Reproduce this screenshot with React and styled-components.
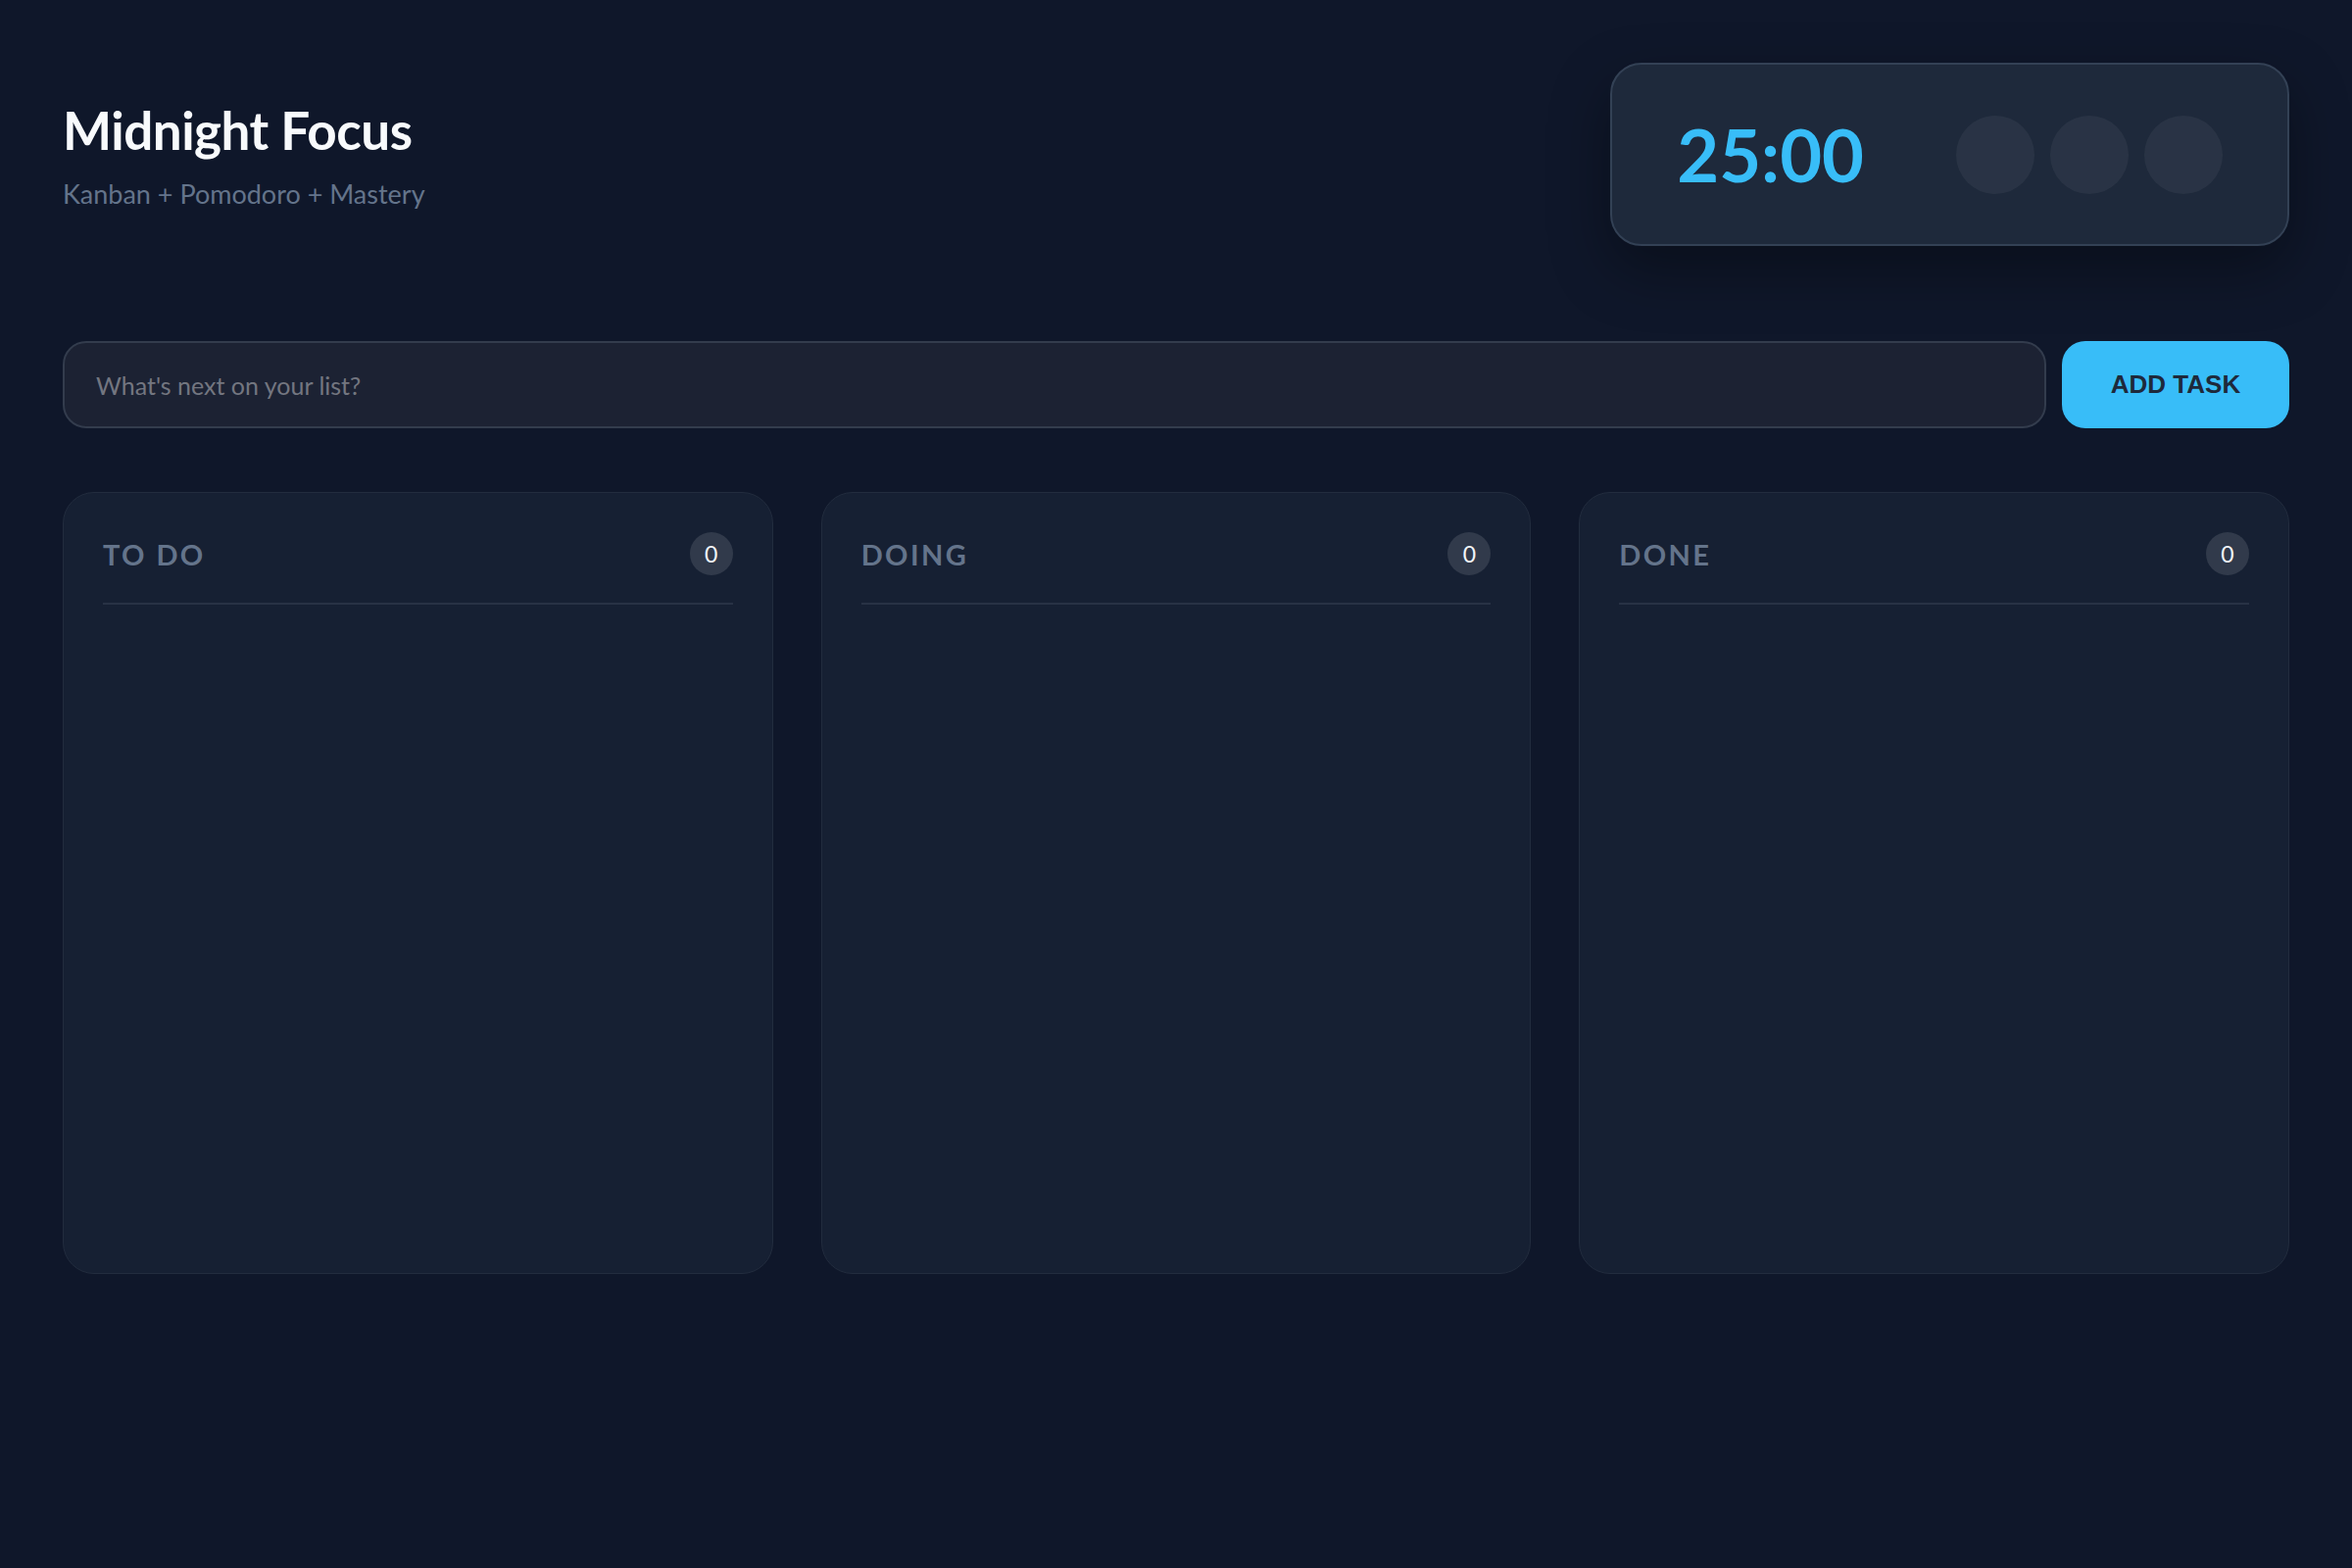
import styled, { createGlobalStyle } from "styled-components";

const GlobalStyle = createGlobalStyle`
  * {
    box-sizing: border-box;
  }
  html, body {
    margin: 0;
    background: #0f172a;
    min-height: 100%;
  }
  body {
    font-family: Lato, "Noto Sans", sans-serif;
    color: #f8fafc;
  }
`;

const Page = styled.div`
  min-height: 1600px;
  padding: 64px;
  background: #0f172a;
`;

const Header = styled.header`
  display: flex;
  justify-content: space-between;
  align-items: center;
  margin-bottom: 97px;
`;

const Brand = styled.div`
  display: flex;
  flex-direction: column;
  gap: 18px;
`;

const Title = styled.h1`
  margin: 0;
  font-size: 53px;
  line-height: 1.2;
  font-weight: 700;
  color: #f8fafc;
  letter-spacing: -0.5px;
`;

const Subtitle = styled.p`
  margin: 0;
  font-size: 27px;
  line-height: 1.2;
  color: #64748b;
`;

const TimerCard = styled.div`
  display: flex;
  align-items: center;
  gap: 94px;
  height: 187px;
  padding: 0 66px;
  background: #1e293b;
  border: 2px solid #334155;
  border-radius: 32px;
  box-shadow: 0 24px 60px rgba(0, 0, 0, 0.35);
`;

const Clock = styled.div`
  font-size: 74px;
  font-weight: 700;
  color: #38bdf8;
  line-height: 1;
  font-variant-numeric: tabular-nums;
`;

const Controls = styled.div`
  display: flex;
  gap: 16px;
`;

const RoundButton = styled.button`
  width: 80px;
  height: 80px;
  border-radius: 50%;
  border: none;
  background: rgba(255, 255, 255, 0.05);
  padding: 0;
  cursor: pointer;
`;

const Composer = styled.form`
  display: flex;
  gap: 16px;
  margin-bottom: 65px;
`;

const TaskInput = styled.input`
  flex: 1;
  height: 89px;
  padding: 0 32px;
  background: #1c2233;
  border: 2px solid #333c4d;
  border-radius: 24px;
  font-family: Lato, "Noto Sans", sans-serif;
  font-size: 25px;
  color: #e2e8f0;
  outline: none;

  &::placeholder {
    color: #737680;
  }
`;

const AddButton = styled.button`
  width: 232px;
  height: 89px;
  border: none;
  border-radius: 24px;
  background: #38bdf8;
  color: #1e293b;
  font-family: "Liberation Sans", Arial, sans-serif;
  font-weight: 700;
  font-size: 26px;
  cursor: pointer;
`;

const Board = styled.div`
  display: grid;
  grid-template-columns: repeat(3, 1fr);
  gap: 49px;
`;

const Column = styled.section`
  min-height: 798px;
  padding: 40px;
  background: rgba(30, 41, 59, 0.5);
  border: 1px solid #222c3e;
  border-radius: 32px;
`;

const ColumnHeader = styled.div`
  display: flex;
  justify-content: space-between;
  align-items: center;
  padding-bottom: 28px;
  border-bottom: 2px solid #283245;
`;

const ColumnTitle = styled.h2`
  margin: 0;
  font-size: 29px;
  font-weight: 700;
  letter-spacing: 2.4px;
  color: #64748b;
  text-transform: uppercase;
`;

const Count = styled.span`
  display: flex;
  align-items: center;
  justify-content: center;
  width: 44px;
  height: 44px;
  border-radius: 50%;
  background: #313a4b;
  color: #f1f5f9;
  font-size: 23px;
`;

const columns = [
  { id: "todo", title: "To Do", tasks: [] },
  { id: "doing", title: "Doing", tasks: [] },
  { id: "done", title: "Done", tasks: [] },
];

export default function App() {
  return (
    <Page>
      <GlobalStyle />
      <Header>
        <Brand>
          <Title>Midnight Focus</Title>
          <Subtitle>Kanban + Pomodoro + Mastery</Subtitle>
        </Brand>
        <TimerCard>
          <Clock>25:00</Clock>
          <Controls>
            <RoundButton aria-label="start" />
            <RoundButton aria-label="pause" />
            <RoundButton aria-label="reset" />
          </Controls>
        </TimerCard>
      </Header>

      <Composer onSubmit={(e) => e.preventDefault()}>
        <TaskInput placeholder="What's next on your list?" />
        <AddButton type="submit">ADD TASK</AddButton>
      </Composer>

      <Board>
        {columns.map((col) => (
          <Column key={col.id}>
            <ColumnHeader>
              <ColumnTitle>{col.title}</ColumnTitle>
              <Count>{col.tasks.length}</Count>
            </ColumnHeader>
          </Column>
        ))}
      </Board>
    </Page>
  );
}
